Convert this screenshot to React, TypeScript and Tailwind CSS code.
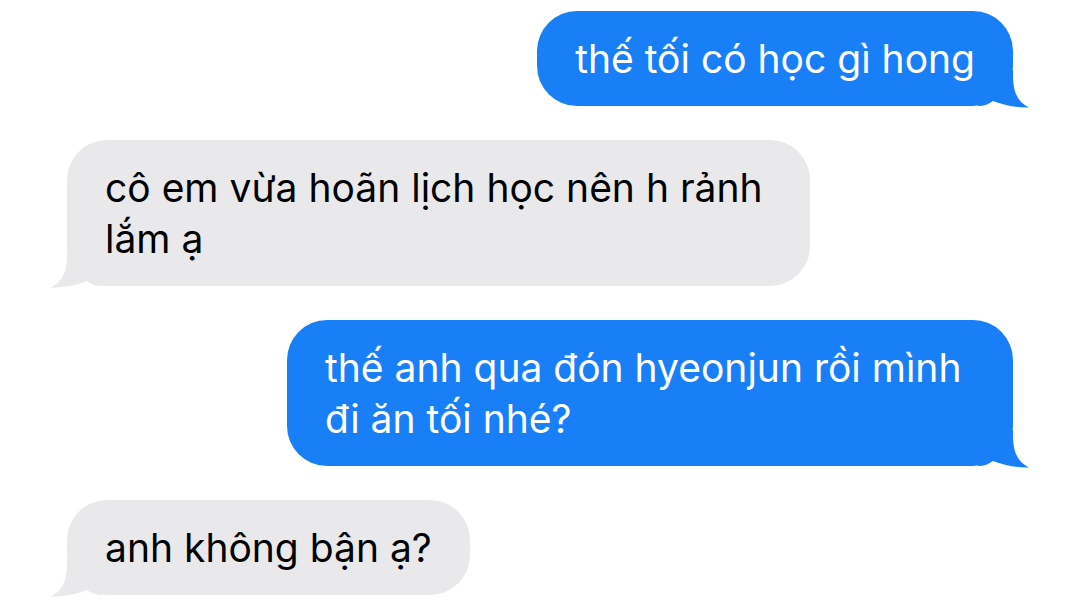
import type { ReactNode } from 'react'

type Message = {
  from: 'me' | 'them'
  text: ReactNode
  width?: string
}

const messages: Message[] = [
  { from: 'me', text: 'thế tối có học gì hong' },
  { from: 'them', text: 'cô em vừa hoãn lịch học nên h rảnh lắm ạ', width: 'w-[743px]' },
  { from: 'me', text: 'thế anh qua đón hyeonjun rồi mình đi ăn tối nhé?', width: 'w-[726px]' },
  { from: 'them', text: 'anh không bận ạ?' }
]

// iMessage style tail, drawn for the right side and mirrored for the left
function Tail({ mine }: { mine: boolean }) {
  return (
    <svg
      viewBox="0 0 52 38"
      className={
        mine
          ? 'absolute -right-[17px] -bottom-[2px] h-[38px] w-[52px] text-[#197ff6]'
          : 'absolute -left-[17px] -bottom-[2px] h-[38px] w-[52px] -scale-x-100 text-[#e9e9eb]'
      }
    >
      <path
        d="M0 0H35V4C35 22 39 31 51 37.5C41 38 26 35.5 15 31C11 34 6 36 0 36Z"
        fill="currentColor"
      />
    </svg>
  )
}

function Bubble({ m }: { m: Message }) {
  const mine = m.from === 'me'
  return (
    <div className={mine ? 'flex justify-end' : 'flex justify-start'}>
      <div
        className={`relative rounded-[40px] px-[38px] py-[22px] text-[39px] leading-[51px] ${m.width ?? 'w-fit'} ${
          mine ? 'bg-[#197ff6] text-white' : 'bg-[#e9e9eb] text-black'
        }`}
      >
        <Tail mine={mine} />
        <span className="relative">{m.text}</span>
      </div>
    </div>
  )
}

export default function App() {
  return (
    <div
      className="min-h-[611px] bg-white px-[67px] pt-[11px]"
      style={{ fontFamily: 'Inter, "Noto Sans", sans-serif' }}
    >
      <div className="flex flex-col gap-[34px]">
        {messages.map((m, i) => (
          <Bubble key={i} m={m} />
        ))}
      </div>
    </div>
  )
}
